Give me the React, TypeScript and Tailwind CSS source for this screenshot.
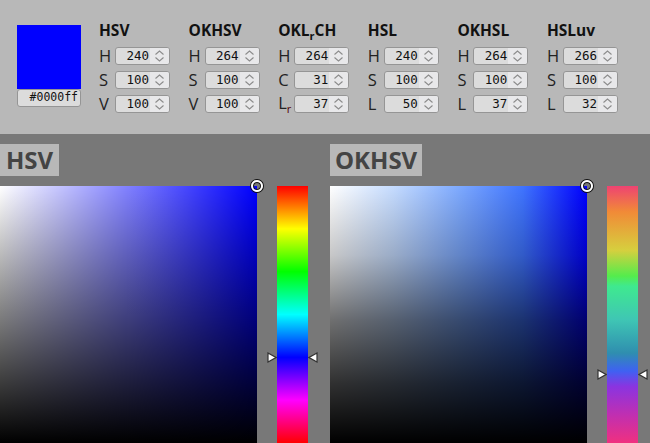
import React from "react";

type Row = { l: React.ReactNode; v: string };
type Col = { title: React.ReactNode; rows: Row[] };

const Spin = () => (
  <svg width="19" height="16" viewBox="0 0 19 16" className="block">
    <path d="M5.5 6.5 L9.5 3 L13.5 6.5" fill="none" stroke="#8c8c8c" strokeWidth="1.1" />
    <path d="M5.5 9.5 L9.5 13 L13.5 9.5" fill="none" stroke="#8c8c8c" strokeWidth="1.1" />
  </svg>
);

const NumBox = ({ v }: { v: string }) => (
  <div className="flex h-[18px] w-[55px] overflow-hidden rounded-[3px] border border-[#959595] bg-[#dcdcdc]">
    <div className="flex flex-1 items-center justify-end pr-[1px] font-['DejaVu_Sans_Mono',monospace] text-[12.5px] leading-none text-[#111]">
      {v}
    </div>
    <div className="flex w-[19px] items-center bg-[#e8e8ea]">
      <Spin />
    </div>
  </div>
);

const cols: Col[] = [
  { title: "HSV", rows: [{ l: "H", v: "240" }, { l: "S", v: "100" }, { l: "V", v: "100" }] },
  { title: "OKHSV", rows: [{ l: "H", v: "264" }, { l: "S", v: "100" }, { l: "V", v: "100" }] },
  {
    title: (
      <>
        OKL<span className="relative top-[4px] text-[11px]">r</span>CH
      </>
    ),
    rows: [
      { l: "H", v: "264" },
      { l: "C", v: "31" },
      {
        l: (
          <>
            L<span className="relative top-[4px] text-[11px] text-[#500]">r</span>
          </>
        ),
        v: "37",
      },
    ],
  },
  { title: "HSL", rows: [{ l: "H", v: "240" }, { l: "S", v: "100" }, { l: "L", v: "50" }] },
  { title: "OKHSL", rows: [{ l: "H", v: "264" }, { l: "S", v: "100" }, { l: "L", v: "37" }] },
  { title: "HSLuv", rows: [{ l: "H", v: "266" }, { l: "S", v: "100" }, { l: "L", v: "32" }] },
];

const TriRight = () => (
  <svg width="10" height="11" viewBox="0 0 10 11" className="block">
    <polygon points="1,1 9,5.5 1,10" fill="#fff" stroke="#333" strokeWidth="1.2" />
  </svg>
);
const TriLeft = () => (
  <svg width="10" height="11" viewBox="0 0 10 11" className="block">
    <polygon points="9,1 1,5.5 9,10" fill="#fff" stroke="#333" strokeWidth="1.2" />
  </svg>
);

const Panel = ({
  title,
  canvas,
  bar,
  markerY,
  pad,
}: {
  title: string;
  canvas: string;
  bar: string;
  markerY: number;
  pad: string;
}) => (
  <div className="flex w-[308px] flex-col">
    <div className="flex">
      <div
        className={`h-[32px] bg-[#b8b8b8] font-['Open_Sans',sans-serif] text-[24px] font-bold leading-[32px] text-[#444] ${pad}`}
      >
        {title}
      </div>
    </div>
    <div className="mt-[10px] flex">
      <div className="relative h-[257px] w-[257px]">
        <div className={`h-full w-full ${canvas}`} />
        <div className="absolute left-[251px] top-[-6px] h-[12px] w-[12px] rounded-full border-2 border-white shadow-[0_0_0_1px_#111,inset_0_0_0_1px_#111]" />
      </div>
      <div className="relative ml-[20px] h-[257px] w-[31px]">
        <div className={`h-full w-full ${bar}`} />
        <div className="absolute left-[-10px]" style={{ top: markerY - 5.5 }}>
          <TriRight />
        </div>
        <div className="absolute right-[-10px]" style={{ top: markerY - 5.5 }}>
          <TriLeft />
        </div>
      </div>
    </div>
  </div>
);

export default function App() {
  return (
    <div className="h-[443px] w-[650px] overflow-hidden bg-[#787878] font-['Open_Sans',sans-serif]">
      <div className="flex h-[134px] items-start bg-[#b8b8b8] pl-[17px] pt-[19px]">
        <div className="mt-[6px] flex w-[64px] flex-col">
          <div className="h-[64px] w-[64px] bg-[#0000ff]" />
          <div className="flex h-[18px] items-center justify-end rounded-[3px] border border-[#959595] bg-[#dcdcdc] pr-[2px] font-['DejaVu_Sans_Mono',monospace] text-[11.5px] leading-none text-[#111]">
            #0000ff
          </div>
        </div>
        <div className="ml-[18px] flex">
          {cols.map((c, i) => (
            <div key={i} className="flex w-[89.6px] flex-col">
              <div className="h-[22px] whitespace-nowrap text-[15.5px] font-bold leading-[22px] text-[#111]">
                {c.title}
              </div>
              <div className="mt-[6px] flex flex-col gap-[6px]">
                {c.rows.map((r, j) => (
                  <div key={j} className="flex h-[18px] items-center">
                    <div className="w-[16px] whitespace-nowrap text-[16.5px] leading-[18px] text-[#222]">{r.l}</div>
                    <NumBox v={r.v} />
                  </div>
                ))}
              </div>
            </div>
          ))}
        </div>
      </div>
      <div className="flex gap-[22px] pt-[10px]">
        <Panel
          title="HSV"
          pad="px-[6px]"
          canvas="bg-[linear-gradient(to_bottom,rgba(0,0,0,0),#000),linear-gradient(to_right,#fff,rgba(255,255,255,0)),linear-gradient(#0000ff,#0000ff)]"
          bar="bg-[linear-gradient(to_bottom,#ff0000,#ffff00,#00ff00,#00ffff,#0000ff,#ff00ff,#ff0000)]"
          markerY={171.3}
        />
        <Panel
          title="OKHSV"
          pad="px-[5px]"
          canvas="bg-[linear-gradient(to_bottom,rgba(0,0,0,0)_0%,rgba(0,0,0,0.22)_27%,rgba(0,0,0,0.56)_52%,rgba(0,0,0,0.81)_77%,#000_100%),linear-gradient(to_right,#ffffff_0%,#c4dbff_25%,#7eaaff_50%,#3f74ff_75%,#0000ff_100%)]"
          bar="bg-[linear-gradient(to_bottom,#ee4372_0%,#f18a37_10%,#d6cf3e_25%,#55ec4c_35%,#3fe98f_39%,#3fc6b4_52%,#2f8eaf_65%,#3f61f2_72%,#8a34e0_78%,#c02fb1_89%,#f0307f_100%)]"
          markerY={188.5}
        />
      </div>
    </div>
  );
}
